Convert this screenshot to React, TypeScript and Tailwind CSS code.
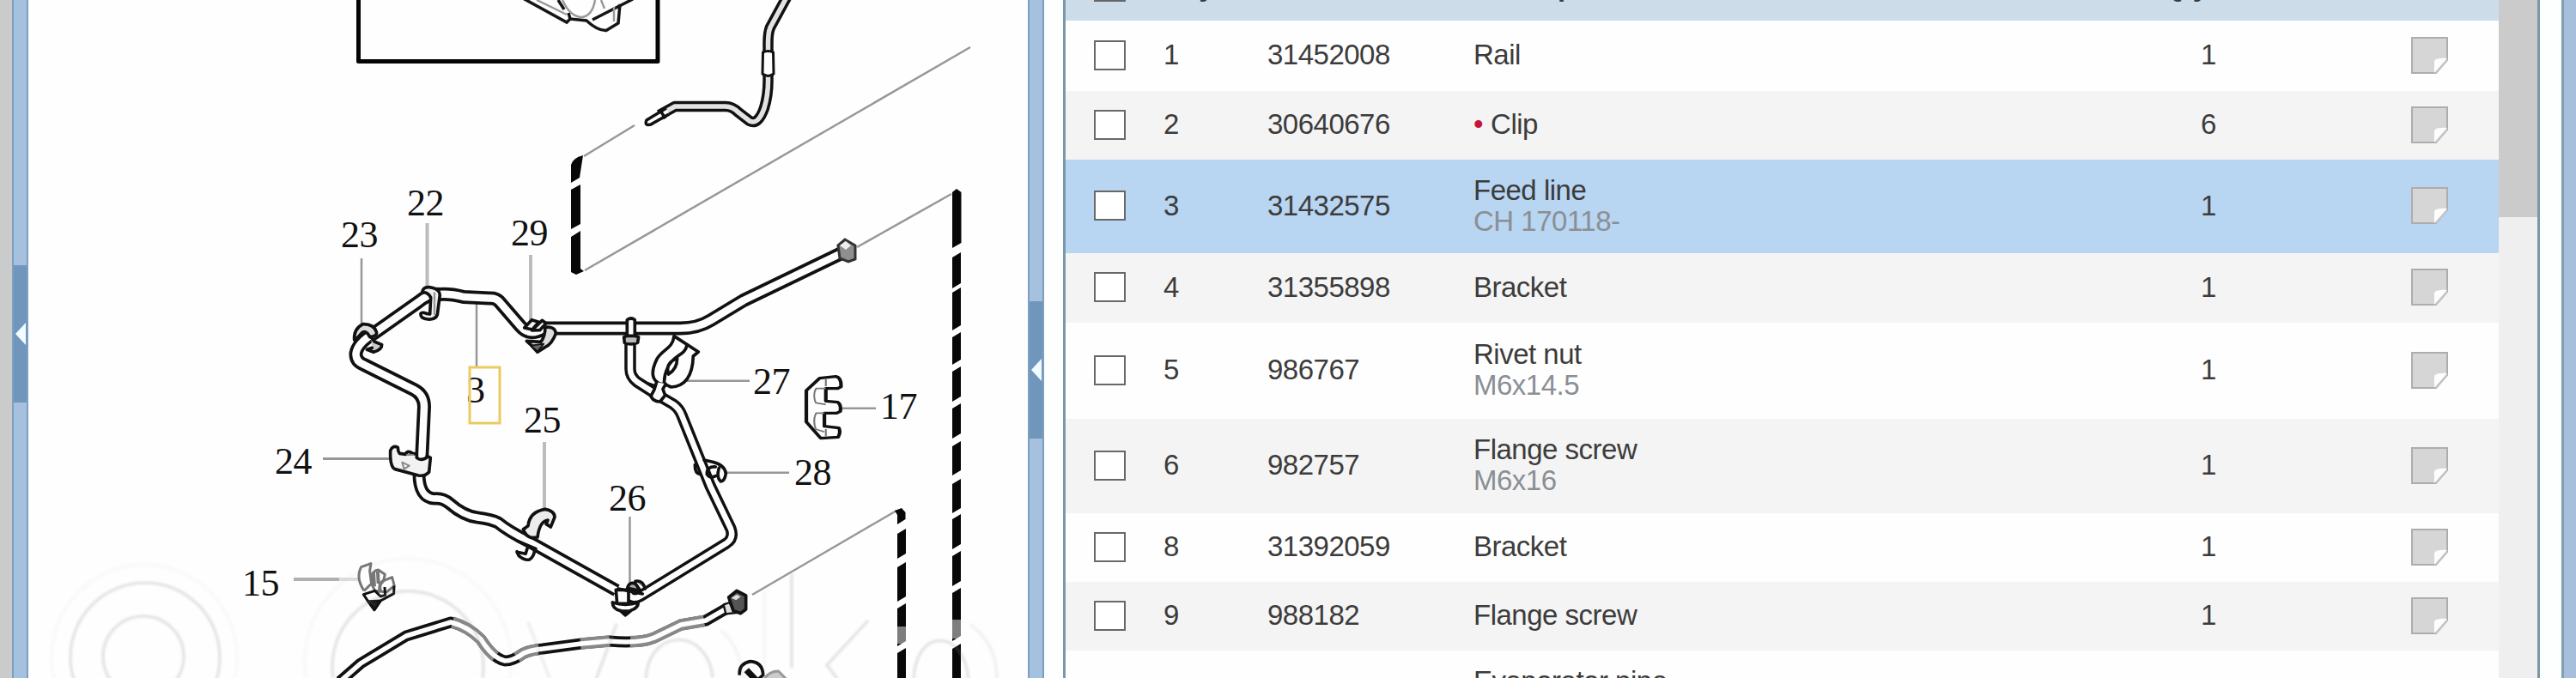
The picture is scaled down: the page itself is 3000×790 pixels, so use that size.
import clsx from "clsx"

interface Part {
    pos: string
    number: string
    name: string
    note?: string
    sub?: boolean
    qty: string
    height: string
    selected?: boolean
}

const parts: Part[] = [
    { pos: "1", number: "31452008", name: "Rail", qty: "1", height: "h-[82px]" },
    { pos: "2", number: "30640676", name: "Clip", sub: true, qty: "6", height: "h-[80px]" },
    { pos: "3", number: "31432575", name: "Feed line", note: "CH 170118-", qty: "1", height: "h-[109px]", selected: true },
    { pos: "4", number: "31355898", name: "Bracket", qty: "1", height: "h-[81px]" },
    { pos: "5", number: "986767", name: "Rivet nut", note: "M6x14.5", qty: "1", height: "h-[112px]" },
    { pos: "6", number: "982757", name: "Flange screw", note: "M6x16", qty: "1", height: "h-[110px]" },
    { pos: "8", number: "31392059", name: "Bracket", qty: "1", height: "h-[80px]" },
    { pos: "9", number: "988182", name: "Flange screw", qty: "1", height: "h-[80px]" },
    { pos: "10", number: "31338047", name: "Evaporator pipe", note: "CH 170118-", qty: "1", height: "h-[110px]" },
]

const callouts = [
    { text: "22", x: 474, y: 250.5 },
    { text: "23", x: 397, y: 287.5 },
    { text: "29", x: 595, y: 285.5 },
    { text: "3", x: 543, y: 469 },
    { text: "25", x: 610, y: 504 },
    { text: "26", x: 709, y: 594.5 },
    { text: "27", x: 877, y: 459 },
    { text: "28", x: 925, y: 565 },
    { text: "17", x: 1025, y: 487.5 },
    { text: "24", x: 320, y: 552 },
    { text: "15", x: 282, y: 693.5 },
]

// x1, y1, x2, y2, width
const leaders = [
    [497.5, 260, 497.5, 334, 4],
    [421, 301, 421, 380, 2.5],
    [618, 297, 618, 374, 4],
    [555, 352, 555, 428, 2.5],
    [376, 534.5, 455, 534.5, 3],
    [634, 515, 634, 592, 4],
    [733.5, 602, 733.5, 680, 2.5],
    [800, 443.7, 873, 443.7, 2.5],
    [846, 550.8, 919, 550.8, 2.5],
    [981, 475.7, 1020, 475.7, 2.5],
    [680, 182, 739, 146, 2.5],
    [681, 315, 1130, 55, 2.5],
    [998, 288, 1108, 226, 2.5],
    [876, 693, 1044, 595, 2.5],
]

// x, top, bottom, width
const dashes = [
    [665, 218, 264, 11],
    [1109, 297, 333, 10],
    [1109, 338, 382, 10],
    [1109, 390, 422, 10],
    [1109, 430, 465, 10],
    [1109, 473, 508, 10],
    [1109, 517, 551, 10],
    [1109, 561, 595, 10],
    [1109, 602, 637, 10],
    [1109, 645, 680, 10],
    [1109, 688, 744, 10],
    [1109, 753, 800, 10],
    [1045, 619, 648, 10],
    [1045, 658, 698, 10],
    [1045, 706, 750, 10],
    [1045, 758, 800, 10],
]

function Pipe({ d, outer = 16, inner = 8.5, fill = "#fefefe" }: { d: string; outer?: number; inner?: number; fill?: string }) {
    return (
        <g fill="none" strokeLinejoin="round">
            <path d={d} stroke="#111" strokeWidth={outer} />
            <path d={d} stroke={fill} strokeWidth={inner} />
        </g>
    )
}

function Watermark() {
    return (
        <g fill="none" stroke="#8a8a8a" strokeOpacity="0.2" strokeWidth="4" filter="url(#soft)">
            <circle cx="169" cy="766" r="87" />
            <circle cx="167" cy="765" r="47" />
            <circle cx="168" cy="766" r="108" strokeOpacity="0.04" />
            <path d="M388 790A88 88 0 1 1 562 790" />
            <circle cx="475" cy="771" r="120" strokeOpacity="0.04" />
            <path d="M615 725L640 790" strokeOpacity="0.12" />
            <path d="M718 727L693 795" />
            <path d="M752 795C752 730 825 730 830 790" />
            <path d="M840 735Q864 755 865 795" strokeOpacity="0.08" />
            <path d="M922 668V778" />
            <path d="M890 690V790" strokeOpacity="0.05" />
            <path d="M1011 723L963 775L978 795" />
            <path d="M1064 795C1064 730 1125 730 1128 795" />
            <path d="M1130 728Q1162 750 1161 795" strokeOpacity="0.1" />
        </g>
    )
}

function Diagram() {
    return (
        <svg viewBox="33 0 1164 790" className="h-[790px] w-[1164px] shrink-0 bg-[#fefefe]">
            <defs>
                <filter id="soft">
                    <feGaussianBlur stdDeviation="1.3" />
                </filter>
            </defs>

            {leaders.map(([x1, y1, x2, y2, w]) => (
                <line key={`${x1}-${y1}`} x1={x1} y1={y1} x2={x2} y2={y2} strokeWidth={w} stroke={w > 3 ? "#bcbcbc" : "#979797"} />
            ))}
            <path d="M342 675H395" stroke="#b0b0b0" strokeWidth="4" />
            <path d="M395 675H418" stroke="#dcdcdc" strokeWidth="4" />

            {/* inset frame with the end of the radiator support */}
            <path d="M417.5 -5V71.5H766V-5" fill="none" stroke="#050505" strokeWidth="5" strokeLinejoin="round" />
            <g fill="none" stroke="#151515" strokeWidth="3.5">
                <path d="M609 -2L660 26L664 22L683 24Q696 36 706 35.500L720 27L722 5" />
                <path d="M664 22L662 15M690 23L737 -1M650 0L657 11" />
                <path d="M625 0L660 17M715 8V25M655 0Q664 20 678 20Q690 18 693 0M700 0L704 10" stroke="#9a9a9a" strokeWidth="2.500" />
            </g>

            {/* upper hose */}
            <Pipe d="M916 -3L897 32Q894.500 38 894.500 50V90Q895 110 890 126Q883 146 873 141L860 131Q853 124 845 124H786L768 134" outer={12.5} inner={5.5} fill="#e2e2e2" />
            <path d="M888.500 61Q894.500 58 900.500 61L901 86Q894.500 91 888 86Z" fill="#fefefe" stroke="#111" strokeWidth="3" />
            <path d="M776 126L753 140Q750 147 758 145L779 133M769 129L775 138" fill="#fefefe" stroke="#111" strokeWidth="3.500" />

            {/* fold lines */}
            <g fill="#080808">
                <path d="M665 213V192Q667 184 679 181L675 207Z" />
                <path d="M665 276L676 269V313L680 316L671 320L665 317Z" />
                <path d="M1109 289V224L1114 220L1119.500 224V283Z" />
                <path d="M1045 611V600L1042 595L1050 592L1054.500 597V605Z" />
                {dashes.map(([x, top, bottom, w]) => (
                    <path key={`${x}-${top}`} d={`M${x} ${top + 3}L${x + w} ${top - 3}V${bottom - 3}L${x} ${bottom + 3}Z`} />
                ))}
            </g>
            <path d="M1108 722H1121V744H1108ZM1044 730H1056V750H1044Z" fill="#fff" fillOpacity="0.48" />

            {/* feed line */}
            <Pipe d="M734 396V430Q734 439 742 445L767 461L784 471Q791 476 794 484L827 566L851 616Q855 627 846 633L745 695Q738 699 733 694" outer={13.5} inner={6.5} />
            <Pipe d="M488 552Q488 580 506 581Q516 580 524 587Q540 601 556 603Q572 605 580 609Q592 619 618 632L718 688" outer={15} inner={7.5} />
            <Pipe d="M980 295L866 350L828 373Q812 383 790 382.500H634Q617 393 606 380L581 351Q577 347 570 347.500L540 346Q524 342 512 343Q500 341 487 352L436 388Q416 400 414.500 412Q414 421 424 425L482 454Q494 460 494 474L491 538" />

            {/* line end fitting */}
            <path d="M976 286L984 279L996 286V302L988 305L978 301Z" fill="#8f8f8f" stroke="#333" strokeWidth="3" />
            <path d="M978 286L985 281L991 286L985 291Z" fill="#eee" />

            {/* clips 22, 23, 24 and 29 */}
            <g transform="translate(400 320) scale(.3333)" fill="#f2f2f2" stroke="#111" strokeWidth="11" strokeLinejoin="round" strokeLinecap="round">
                <path d="M275 62Q278 42 300 44Q342 50 336 78L328 140Q322 158 295 156Q268 154 270 136Q274 130 290 136L302 138L305 80Q295 60 275 62Z" />
                <path d="M318 64V138" stroke="#999" strokeWidth="7" />
                <path d="M38 228Q35 190 68 173Q105 172 115 200Q120 215 92 218Q78 190 62 206L40 230" fill="#ddd" />
                <path d="M96 218L108 234L134 245Q135 262 105 271L82 262L100 256" fill="#ccc" />
                <path d="M164 615Q172 595 190 604Q190 618 196 625L218 628Q222 612 242 625L256 628L256 640Q270 652 290 640L292 634L304 640L299 690Q285 706 262 702L180 680Q162 672 164 615Z" />
                <path d="M205 656L230 668L212 680ZM222 630H243" fill="none" stroke="#888" strokeWidth="6" />
                <path d="M632 186L658 158L682 166L660 192ZM658 195L694 160L708 170L686 194Z" />
                <path d="M705 184Q740 180 742 206Q728 244 704 254L678 271L655 246L640 232L690 235Q705 215 705 184Z" fill="#ddd" />
                <path d="M655 248L700 242L678 268Z" fill="#666" strokeWidth="5" />
            </g>

            {/* joint and clips 27 and 28 */}
            <g transform="translate(600 360) scale(.3333)" fill="#fefefe" stroke="#111" strokeWidth="11" strokeLinejoin="round" strokeLinecap="round">
                <path d="M391 38Q405 28 418 38V98H391Z" />
                <path d="M380 98L391 94H418L431 98L428 118Q405 128 382 118Z" fill="#bbb" />
                <path d="M555 95L640 150L622 165C620 230 598 270 545 273L520 262Q505 265 495 255C475 240 478 210 495 175C515 140 550 140 555 95Z" />
                <path d="M600 125C595 165 550 160 533 205C518 235 522 250 520 262M566 172Q522 190 536 228Q566 210 566 172Z" fill="none" />
                <path d="M466 262L490 270M494 256L486 282L474 305Q484 325 506 324L524 302L516 280L526 262" />
                <path d="M628 545Q628 575 645 577M660 528L690 535Q732 545 736 575Q732 602 718 603Q702 590 712 556M700 552Q668 550 670 578Q680 594 700 584" fill="none" />
            </g>

            {/* clips 25 and 26 */}
            <g transform="translate(580 570) scale(.3333)" fill="#ececec" stroke="#111" strokeWidth="11" strokeLinejoin="round" strokeLinecap="round">
                <path d="M88 140L105 128Q110 78 165 70Q198 76 198 98L184 132L168 122L174 108Q145 112 138 168L118 170Q96 165 88 140Z" />
                <path d="M70 182L132 208M66 218L72 232Q92 250 110 246Q126 236 128 212M66 220L96 226L102 208" fill="none" />
                <path d="M412 352H456V400H416Z" fill="#fefefe" />
                <path d="M400 396Q400 418 428 425L445 440L464 424Q490 415 490 396Q445 410 400 396Z" fill="#fefefe" />
                <path d="M430 426L445 440L462 426Z" fill="#111" />
                <path d="M420 348L505 366M452 346Q458 322 480 330L498 356ZM480 322Q505 316 514 348" fill="#aaa" />
            </g>

            {/* lower hose, faded where the watermark lies over it */}
            <g fill="none" strokeLinejoin="round">
                <path d="M396 794L420 773L473 741L525 725Q545 730 560 745Q574 767 588 770Q598 770 610 761Q620 757 632 756L677 750L710 747Q745 750 762 743L793 728L822 723L848 708" stroke="#111" strokeWidth="13" />
                <path d="M527 725Q545 730 560 745Q570 760 577 765M602 766Q614 757 627 757M676 750L710 747M734 747.500Q750 748 762 743L793 728L820 723.500" stroke="#888" strokeWidth="13.500" />
                <path d="M396 794L420 773L473 741L525 725Q545 730 560 745Q574 767 588 770Q598 770 610 761Q620 757 632 756L677 750L710 747Q745 750 762 743L793 728L822 723L848 708" stroke="#fefefe" strokeWidth="5.500" />
            </g>
            <g transform="translate(580 570) scale(.3333)" stroke="#111" strokeWidth="11" strokeLinejoin="round">
                <path d="M788 404L808 396L832 432L796 436Z" fill="#ddd" strokeWidth="7" />
                <path d="M806 378L834 355L866 372V420L848 434L822 425Z" fill="#555" />
                <path d="M815 380L834 368L848 376L832 388Z" fill="#ddd" stroke="none" />
                <path d="M844 650Q840 610 882 602Q925 605 926 650L905 668" fill="#fefefe" />
                <path d="M868 632L902 668" strokeWidth="22" />
                <path d="M930 665Q945 636 980 636L1008 665Z" fill="#ccc" stroke="#999" strokeWidth="9" />
            </g>

            {/* clip 17 */}
            <g transform="translate(620 390) scale(.4209 .3333)" fill="#fefefe" stroke="#111" strokeWidth="10" strokeLinejoin="round">
                <path d="M758 195L795 152L840 146Q855 150 854 182L845 188H812V232L845 236Q855 245 852 268L842 274H808V320L848 326Q854 340 846 358L798 362L758 305Z" />
                <path d="M812 188H785Q775 210 784 238L812 244M808 274H785Q775 300 784 330L808 340M812 155V180M812 330V355" fill="none" stroke="#777" strokeWidth="5" />
            </g>

            {/* clip 15 */}
            <g transform="translate(60 640) scale(.3333)" fill="#fefefe" strokeWidth="9" strokeLinejoin="round">
                <path d="M1092 145Q1062 100 1082 62L1116 50L1112 75L1118 120L1092 145M1118 120Q1115 75 1142 72L1165 88L1160 110L1190 98L1198 128L1170 150L1130 145Z" stroke="#777" />
                <path d="M1125 80L1128 130M1160 110Q1140 122 1150 150M1140 78L1142 120" fill="none" stroke="#777" strokeWidth="12" />
                <path d="M1197 128L1196 155L1150 180L1128 212L1106 182L1090 158L1130 145L1150 165L1166 160L1164 132" fill="none" stroke="#111" />
                <path d="M1106 182L1150 180L1128 212Z" fill="#222" stroke="#111" />
            </g>

            <Watermark />

            <g fill="#111" fontSize="44" className="font-['Liberation_Serif',serif]">
                {callouts.map((c) => (
                    <text key={c.text} x={c.x} y={c.y}>{c.text}</text>
                ))}
            </g>
            <rect x="547" y="428" width="35" height="65" fill="none" stroke="#e9cb62" strokeWidth="3" />
        </svg>
    )
}

function Splitter({ pad, handle }: { pad: string; handle: string }) {
    return (
        <div className={clsx("flex h-full w-[19px] shrink-0 flex-col border-x-2 border-[#7d9fc2] bg-[#a6c1dd]", pad)}>
            <div className={clsx("flex w-full items-center justify-center bg-[#7097bb]", handle)}>
                <svg viewBox="0 0 12 26" className="h-[26px] w-3">
                    <path d="M12 0V26L0 13Z" fill="#f2fbff" />
                </svg>
            </div>
        </div>
    )
}

function Checkbox() {
    return <span className="block h-[35px] w-[37px] border-[2.5px] border-[#686868] bg-white" />
}

function NoteIcon() {
    return (
        <svg viewBox="0 0 43 43" className="size-[43px]">
            <path d="M1 1H42V27L29 42H1Z" fill="#d6d6d6" stroke="#adadad" strokeWidth="2" />
            <path d="M27 42V28Q30 24 42 25Z" fill="#fdfdfd" />
            <path d="M42 27L29 42" stroke="#c4c4c4" strokeWidth="2" />
        </svg>
    )
}

const columns = "grid shrink-0 grid-cols-[33px_81px_121px_240px_802px_290px_100px] items-center"

function PartRow({ part, index }: { part: Part; index: number }) {
    return (
        <div className={clsx(columns, "pb-0.5", part.height, part.selected ? "bg-[#b8d5f1]" : index % 2 ? "bg-[#f4f4f4]" : "bg-[#fefefe]")}>
            <span />
            <Checkbox />
            <span>{part.pos}</span>
            <span>{part.number}</span>
            <div>
                <div className="whitespace-nowrap">
                    {part.sub && <span className="mr-[9px] text-[#c8143c]">•</span>}
                    {part.name}
                </div>
                {part.note && <div className="text-[#8a8f94]">{part.note}</div>}
            </div>
            <span className="pl-[45px]">{part.qty}</span>
            <NoteIcon />
        </div>
    )
}

export default function App() {
    return (
        <div className="flex h-[790px] w-[3000px] overflow-hidden bg-[#fdfefe] font-['Liberation_Sans',Arial,sans-serif] text-[33px] leading-9 tracking-[-0.5px] text-[#3c3c3c]">
            <div className="w-[14px] shrink-0 bg-[#c9cccb]" />
            <Splitter pad="pt-[309px]" handle="h-[160px]" />
            <Diagram />
            <Splitter pad="pt-[351px]" handle="h-[160px]" />

            <div className="ml-[22px] flex w-[1720px] shrink-0 border-x-[3px] border-[#7c98a8]">
                <div className="flex w-[1669px] shrink-0 flex-col overflow-hidden">
                    <div className={clsx(columns, "-mt-14 h-20 bg-[#cddce9] font-bold")}>
                        <span />
                        <Checkbox />
                        <span>Key</span>
                        <span>Part no</span>
                        <span>Description</span>
                        <span>Qty</span>
                        <span />
                    </div>
                    {parts.map((part, i) => (
                        <PartRow key={part.pos} part={part} index={i} />
                    ))}
                </div>
                <div className="grow bg-[#efefef]">
                    <div className="h-[253px] bg-[#cbcbcb]" />
                </div>
            </div>

            <div className="ml-[25px] grow border-l-[3px] border-[#7fa0b0] bg-[#a8bfdb]" />
        </div>
    )
}
